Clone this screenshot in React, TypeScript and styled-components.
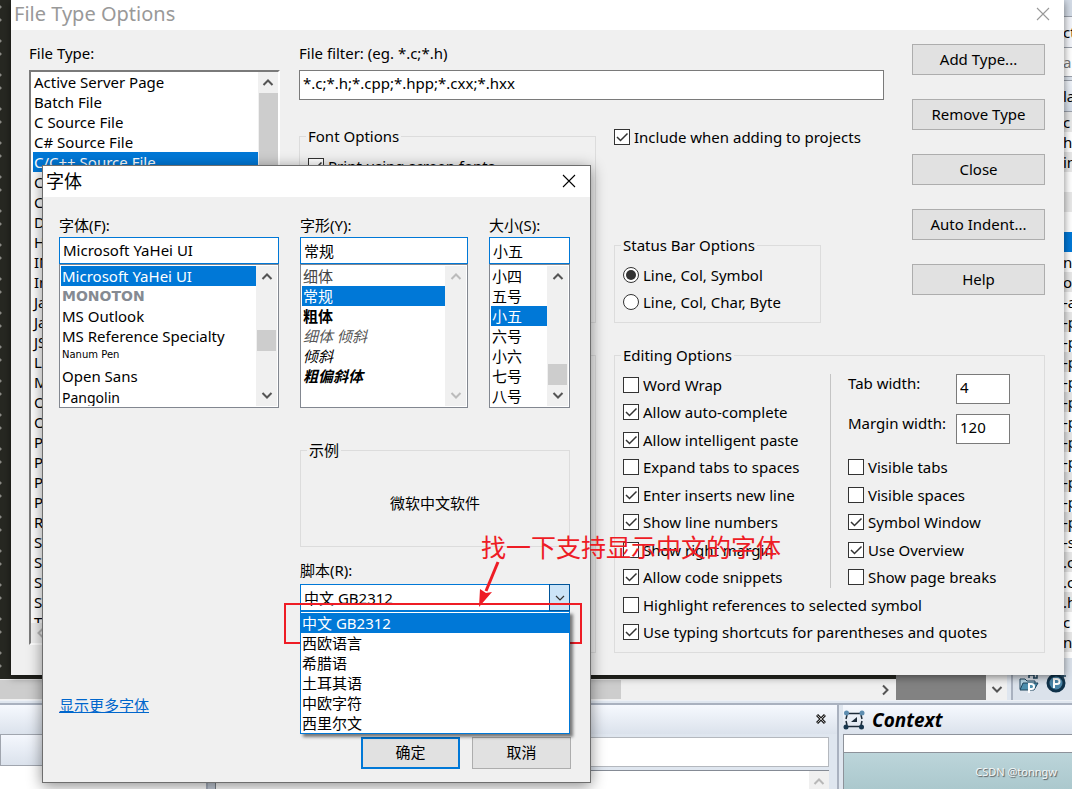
import React from "react";
import styled, { createGlobalStyle, css } from "styled-components";

const UI = `"Noto Sans", "Noto Sans CJK SC", sans-serif`;
const BLUE = "#0078d7";
const FACE = "#f0f0f0";

const Global = createGlobalStyle`
  *, *::before, *::after { box-sizing: border-box; }
  body { margin: 0; font: 15px/20px ${UI}; color: #000; overflow: hidden; }
  input, button, select { font: inherit; color: inherit; margin: 0; }
  ul { list-style: none; margin: 0; padding: 0; }
`;

/* ---------- desktop behind the dialogs ---------- */

const Desktop = styled.div`
  position: relative;
  display: flex;
  flex-direction: column;
  min-height: 100vh;
  overflow: hidden;
  background: #dfe6ef;
`;
const Workspace = styled.div`
  display: flex;
  flex: 1;
  border-bottom: 1px solid #eef1f6;
`;
const Editor = styled.div`
  display: flex;
  flex-direction: column;
  flex: 1;
`;
const Code = styled.div`
  flex: 1;
  background:
    radial-gradient(circle at 0 7px, #8b8b86 1px, transparent 2px) 0 0 / 11px 34px repeat-y,
    radial-gradient(circle at 0 20px, #8b8b86 1px, transparent 2px) 0 0 / 11px 34px repeat-y,
    #272822;
`;
const HScroll = styled.div`
  display: flex;
  align-items: center;
  height: 21px;
  background: ${FACE};
`;
const HThumb = styled.div`
  width: 621px;
  height: 19px;
  background: #cdcdcd;
`;
const HArrow = styled.div`
  display: flex;
  margin-left: auto;
  padding-right: 5px;
`;
const GreyGap = styled.div`
  width: 90px;
  background: #828282;
`;
const VScroll = styled.div`
  display: flex;
  flex-direction: column;
  justify-content: flex-end;
  align-items: center;
  width: 21px;
  padding-bottom: 5px;
  background: ${FACE};
`;
const VSplit = styled.div`
  width: 6px;
  background: #dfe6ef;
  border-right: 2px solid #a9b1bf;
`;
const Project = styled.aside`
  display: flex;
  flex-direction: column;
  width: 59px;
  background: #dbe2eb;
`;
const Strip = styled.div<{ $h: number; $bg: string; $c?: string }>`
  height: ${(p) => p.$h}px;
  line-height: ${(p) => p.$h - 1}px;
  padding-left: 50px;
  overflow: hidden;
  white-space: nowrap;
  background: ${(p) => p.$bg};
  color: ${(p) => p.$c ?? "#000"};
  border-bottom: 1px solid #9aa0aa;
`;
const FileRow = styled.li<{ $on?: boolean }>`
  height: 20px;
  padding-left: 50px;
  overflow: hidden;
  white-space: nowrap;
  background: #fff;
  &:nth-child(odd) { background: #e8e8e8; }
  ${(p) => p.$on && css`&&:nth-child(odd) { background: ${BLUE}; }`}
`;
const FileRows = styled.ul`
  height: 546px;
  overflow: hidden;
`;
const Tools = styled.div`
  display: flex;
  gap: 7px;
  padding: 15px 4px 0 6px;
`;
const HSplit = styled.div`
  height: 4px;
  border-bottom: 2px solid #a9b1bf;
`;
const Bottom = styled.div`
  display: flex;
  height: 84px;
`;
const Panel = styled.section`
  display: flex;
  flex-direction: column;
  flex: 1;
  border-right: 2px solid #a9b1bf;
`;
const ContextPanel = styled.section`
  display: flex;
  flex-direction: column;
  width: 233px;
  padding-left: 4px;
`;
const PanelBar = styled.header`
  display: flex;
  align-items: center;
  height: 29px;
  background: linear-gradient(#f6f9fe, #dbe2ec);
`;
const CloseTiny = styled.button`
  display: flex;
  margin-left: auto;
  margin-right: 11px;
  padding: 0 0 2px;
  border: 0;
  background: none;
`;
const ContextTitle = styled.h2`
  margin: 0 0 0 7px;
  font: italic bold 19px/26px ${UI};
`;
const Split = styled.div`
  display: flex;
  flex: 1;
`;
const TabSide = styled.div`
  width: 206px;
  background: #fff;
`;
const TabBox = styled.div`
  height: 32px;
  border: 1px solid #a0a5ae;
  background: linear-gradient(#f4f7fd, #dbe2ec);
`;
const SideSplit = styled.div`
  width: 10px;
  background: #c3cbd7;
  border-left: 2px solid #a9b1bf;
  border-right: 1px solid #7a8088;
`;
const ResultSide = styled.div`
  display: flex;
  flex-direction: column;
  flex: 1;
  gap: 3px;
  padding: 3px 8px 0 0;
`;
const SearchBox = styled.input`
  height: 30px;
  border: 1px solid #b4b8be;
  background: #fff;
`;
const Results = styled.div`
  display: flex;
  flex: 1;
  justify-content: flex-end;
  border-top: 1px solid #858b95;
  background: #fff;
`;
const ResultScroll = styled.div`
  display: flex;
  justify-content: center;
  width: 20px;
  padding-top: 5px;
  background: ${FACE};
`;
const ContextLine = styled.div`
  height: 19px;
  border: 1px solid #8d929a;
  border-right: 0;
  background: #fff;
`;
const ContextView = styled.div`
  flex: 1;
  padding: 9px 15px 0 0;
  border-left: 1px solid #8d929a;
  background: linear-gradient(#bcd5da, #abc8cd);
  color: #f4f8f8;
  font-size: 11px;
  text-align: right;
  text-shadow: 1px 1px 1px #555;
`;

/* ---------- shared controls ---------- */

const Chevron = ({ dir = "down", color = "#555" }: { dir?: string; color?: string }) => {
  const d: Record<string, string> = {
    down: "M1.500 4L6 8.500 10.500 4",
    up: "M1.500 8L6 3.500 10.500 8",
    right: "M4 1.500L8.500 6 4 10.500",
    left: "M8 1.500L3.500 6 8 10.500",
  };
  return (
    <svg width="12" height="12" viewBox="0 0 12 12" fill="none" stroke={color} strokeWidth="2">
      <path d={d[dir]} />
    </svg>
  );
};
const Cross = ({ color }: { color: string }) => (
  <svg width="14" height="14" viewBox="0 0 14 14" stroke={color} strokeWidth="1.1">
    <path d="M1 1l12 12M13 1L1 13" />
  </svg>
);

const Check = styled.label`
  display: flex;
  align-items: center;
  gap: 4px;
  height: 22px;
  white-space: nowrap;
`;
const Mark = styled.span`
  display: grid;
  width: 16px;
  height: 16px;
  > * { grid-area: 1 / 1; }
  svg { pointer-events: none; }
`;
const Tick = styled.input<{ $round?: boolean }>`
  appearance: none;
  width: 16px;
  height: 16px;
  border: 1px solid #333;
  border-radius: ${(p) => (p.$round ? "50%" : "0")};
  background: #fff;
`;
const CheckBox = ({ label, on }: { label: string; on?: boolean }) => (
  <Check>
    <Mark>
      <Tick type="checkbox" defaultChecked={on} />
      {on && (
        <svg width="16" height="16" viewBox="0 0 16 16" fill="none" stroke="#333" strokeWidth="1.5">
          <path d="M3 8l3.5 3.5L13.5 4.5" />
        </svg>
      )}
    </Mark>
    {label}
  </Check>
);
const Radio = ({ label, on }: { label: string; on?: boolean }) => (
  <Check>
    <Mark>
      <Tick $round type="radio" name="statusbar" defaultChecked={on} />
      {on && (
        <svg width="16" height="16" viewBox="0 0 16 16">
          <circle cx="8" cy="8" r="5" fill="#333" />
        </svg>
      )}
    </Mark>
    {label}
  </Check>
);
const Button = styled.button<{ $primary?: boolean }>`
  height: 31px;
  padding: 0 0 2px;
  border: 1px solid #adadad;
  background: #e1e1e1;
  ${(p) => p.$primary && css`border: 2px solid ${BLUE};`}
`;
const Group = styled.fieldset`
  min-width: 0;
  margin: 0;
  padding: 8px 8px 9px;
  border: 1px solid #dcdcdc;
`;
const Legend = styled.legend`
  height: 22px;
  padding: 0 2px 0 0;
  line-height: 22px;
  box-shadow: -2px 0 ${FACE};
`;
const Field = styled.input`
  height: 30px;
  padding: 0 3px 5px;
  border: 1px solid #7a7a7a;
  background: #fff;
`;
const TitleBar = styled.header<{ $dim?: boolean }>`
  display: flex;
  align-items: center;
  justify-content: space-between;
  height: ${(p) => (p.$dim ? 30 : 31)}px;
  padding: 0 14px 2px 3px;
  background: #fff;
  color: ${(p) => (p.$dim ? "#999" : "#000")};
  h1 { margin: 0; font: ${(p) => (p.$dim ? 20 : 18)}px/28px ${UI}; }
  button { display: flex; padding: 0; border: 0; background: none; }
`;
const ScrollBar = styled.div<{ $w: number }>`
  display: flex;
  flex-direction: column;
  align-items: center;
  width: ${(p) => p.$w}px;
  padding: 5px 0;
  background: ${FACE};
`;
const Thumb = styled.div<{ $h: number; $push: number }>`
  width: 19px;
  height: ${(p) => p.$h}px;
  margin-top: ${(p) => p.$push}px;
  background: #cdcdcd;
`;
const Spring = styled.div`
  flex: 1;
`;

/* ---------- File Type Options dialog ---------- */

const TypeDialog = styled.section`
  position: absolute;
  top: 0;
  left: 11px;
  right: 8px;
  background: ${FACE};
  box-shadow: 0 2px 8px rgba(0, 0, 0, 0.5);
`;
const TypeBody = styled.div`
  display: grid;
  grid-template-columns: 252px 297px 1fr 143px;
  grid-template-rows: auto 202px auto;
  gap: 21px 18px;
  padding: 14px 19px 22px 18px;
`;
const Stack = styled.div`
  display: flex;
  flex-direction: column;
  gap: 8px;
  line-height: 18px;
`;
const TypeColumn = styled(Stack)`
  grid-row: 1 / 4;
  margin: 0 1px 8px 0;
`;
const TypeList = styled.div`
  display: flex;
  flex-direction: column;
  flex: 1;
  contain: size;
  overflow: hidden;
  border: 2px solid;
  border-color: #7a7a7a #fff #fff #7a7a7a;
  background: #fff;
`;
const TypeRows = styled.div`
  display: flex;
  flex: 1;
  min-height: 0;
  ul { flex: 1; padding-left: 2px; overflow: hidden; }
`;
const TypeRow = styled.li<{ $on?: boolean }>`
  height: 20px;
  line-height: 20px;
  padding-left: 1px;
  ${(p) => p.$on && css`background: ${BLUE}; color: #fff;`}
`;
const ListFoot = styled.div`
  display: flex;
  align-items: center;
  height: 20px;
  padding-left: 4px;
  background: ${FACE};
`;
const FilterCell = styled(Stack)`
  grid-column: 2 / 4;
`;
const ButtonColumn = styled.div`
  grid-column: 4;
  grid-row: 1 / 3;
  display: flex;
  flex-direction: column;
  gap: 24px;
  margin-left: 10px;
`;
const FontGroup = styled(Group)`
  grid-column: 2;
  margin-top: 4px;
`;
const EmptyGroup = styled(Group)`
  grid-column: 2;
  margin-top: 11px;
`;
const MiddleCell = styled.div`
  grid-column: 3;
  display: flex;
  flex-direction: column;
  justify-content: space-between;
  align-items: flex-start;
  padding-top: 5px;
`;
const StatusGroup = styled(Group)`
  display: flex;
  flex-direction: column;
  gap: 5px;
  width: 207px;
`;
const EditGroup = styled(Group)`
  grid-column: 3 / 5;
`;
const EditRows = styled.div`
  display: flex;
  flex-direction: column;
  justify-content: space-between;
  height: 269px;
`;
const EditColumns = styled.div`
  display: flex;
  height: 214px;
`;
const Spread = styled.div`
  display: flex;
  flex-direction: column;
  justify-content: space-between;
`;
const EditLeft = styled(Spread)`
  width: 208px;
  border-right: 1px solid #c4c4c4;
  margin-right: 17px;
`;
const EditRight = styled(Spread)`
  flex: 1;
`;
const Widths = styled.div`
  display: grid;
  grid-template-columns: 108px 54px;
  row-gap: 10px;
  line-height: 18px;
`;
const RightChecks = styled(Spread)`
  height: 132px;
`;

/* ---------- font dialog ---------- */

const FontDialog = styled.section`
  position: absolute;
  top: 165px;
  left: 42px;
  width: 549px;
  border: 1px solid #6e6e6e;
  background: ${FACE};
  box-shadow: 0 3px 14px rgba(0, 0, 0, 0.45);
`;
const FontBody = styled.div`
  padding: 18px 19px 13px 16px;
`;
const Pickers = styled.div`
  display: grid;
  grid-template-columns: 220px 168px 81px;
  column-gap: 21px;
`;
const Picker = styled.div`
  display: flex;
  flex-direction: column;
`;
const PickLabel = styled.label`
  height: 22px;
`;
const PickInput = styled.input`
  width: 100%;
  height: 27px;
  padding: 0 3px 1px;
  border: 1px solid ${BLUE};
  background: #fff;
`;
const PickList = styled.div`
  display: flex;
  height: 144px;
  padding: 1px;
  border: 1px solid #828790;
  background: #fff;
  ul { flex: 1; overflow: hidden; }
`;
const Pick = styled.li<{ $on?: boolean; $look?: string }>`
  height: 20px;
  padding-left: 1px;
  white-space: nowrap;
  ${(p) => p.$on && css`background: ${BLUE}; color: #fff;`}
  ${(p) => p.$look === "display" && css`font: bold 14px/20px "DejaVu Sans", sans-serif; color: #858a92;`}
  ${(p) => p.$look === "pen" && css`font: 10px/18px "DejaVu Sans", sans-serif;`}
  ${(p) => p.$look === "hand" && css`font-size: 14px; line-height: 23px;`}
  ${(p) => p.$look === "light" && css`color: #444;`}
  ${(p) => p.$look === "bold" && css`font-weight: bold;`}
  ${(p) => p.$look === "lightItalic" && css`color: #555; font-style: italic;`}
  ${(p) => p.$look === "italic" && css`font-style: italic;`}
  ${(p) => p.$look === "boldItalic" && css`font-weight: bold; font-style: italic;`}
`;
const RightHalf = styled.div`
  margin: 31px 1px 0 241px;
`;
const Sample = styled(Group)`
  height: 108px;
`;
const SampleText = styled.p`
  margin: 24px 0 0;
  text-align: center;
`;
const Script = styled.div`
  position: relative;
  display: flex;
  flex-direction: column;
  margin-top: 13px;
`;
const SelectWrap = styled.div`
  display: grid;
  grid-template-columns: 1fr 21px;
  margin-top: 2px;
`;
const ScriptSelect = styled.select`
  appearance: none;
  grid-area: 1 / 1 / 2 / 3;
  height: 27px;
  padding: 0 3px;
  border: 1px solid ${BLUE};
  border-radius: 0;
  background: #fff;
`;
const SelectArrow = styled.div`
  grid-area: 1 / 2;
  display: flex;
  align-items: center;
  justify-content: center;
  border: 1px solid #005499;
  background: #cce4f7;
  pointer-events: none;
`;
const Menu = styled.ul`
  position: absolute;
  top: 51px;
  left: 0;
  right: 0;
  z-index: 1;
  padding-top: 1px;
  border: 1px solid ${BLUE};
  background: #fff;
  box-shadow: 3px 3px 3px rgba(0, 0, 0, 0.5);
`;
const MenuItem = styled.li<{ $on?: boolean }>`
  height: 20px;
  padding-left: 1px;
  ${(p) => p.$on && css`background: ${BLUE}; color: #fff;`}
`;
const More = styled.a`
  display: inline-block;
  margin-top: 84px;
  color: #0066cc;
`;
const Actions = styled.div`
  display: flex;
  justify-content: flex-end;
  gap: 12px;
  margin-top: 22px;
  button { width: 99px; height: 32px; }
`;

/* ---------- annotation ---------- */

const RedFrame = styled.div`
  position: absolute;
  top: 603px;
  left: 284px;
  width: 298px;
  height: 41px;
  border: 2px solid #ee1c25;
`;
const RedNote = styled.div`
  position: absolute;
  top: 529px;
  left: 481px;
  font-size: 25px;
  line-height: 36px;
  color: #ee1c25;
  white-space: nowrap;
`;
const RedArrow = styled.svg`
  position: absolute;
  top: 558px;
  left: 474px;
`;

const types = ["Active Server Page", "Batch File", "C Source File", "C# Source File", "C/C++ Source File",
  "C", "C", "D", "H", "IN", "In", "Ja", "Ja", "JS", "L", "M", "O", "O", "P", "P", "P", "P", "R", "S", "S", "S", "S", "T"];
const files = ["c", "h", "in", "", "", "", "", "ne", "o", "-a", "-p", "-p", "-p", "-p", "-p", "-p", "-p", "-p", "-p", "-p", "-p",
  "-s", ".c", ".c", ".h", "c", "n", "ne"];
const fonts: [string, string?][] = [["Microsoft YaHei UI"], ["MONOTON", "display"], ["MS Outlook"], ["MS Reference Specialty"],
  ["Nanum Pen", "pen"], ["Open Sans"], ["Pangolin", "hand"]];
const styles: [string, string?][] = [["细体", "light"], ["常规"], ["粗体", "bold"], ["细体 倾斜", "lightItalic"], ["倾斜", "italic"], ["粗偏斜体", "boldItalic"]];
const sizes = ["小四", "五号", "小五", "六号", "小六", "七号", "八号"];
const scripts = ["中文 GB2312", "西欧语言", "希腊语", "土耳其语", "中欧字符", "西里尔文"];
const leftChecks: [string, boolean][] = [["Word Wrap", false], ["Allow auto-complete", true], ["Allow intelligent paste", true],
  ["Expand tabs to spaces", false], ["Enter inserts new line", true], ["Show line numbers", true], ["Show right margin", false], ["Allow code snippets", true]];
const rightChecks: [string, boolean][] = [["Visible tabs", false], ["Visible spaces", false], ["Symbol Window", true], ["Use Overview", true], ["Show page breaks", false]];

const Background = () => (
  <>
    <Workspace>
      <Editor>
        <Code />
        <HScroll>
          <HThumb />
          <HArrow><Chevron dir="right" /></HArrow>
        </HScroll>
      </Editor>
      <GreyGap />
      <VScroll><Chevron /></VScroll>
      <VSplit />
      <Project>
        <Strip $h={17} $bg="#d3dbe6" />
        <Strip $h={31} $bg="#f3f5fa">ct</Strip>
        <Strip $h={29} $bg="#fff" $c="#777">a</Strip>
        <Strip $h={4} $bg="#dbe2eb" />
        <Strip $h={31} $bg="linear-gradient(#f0f4fa,#d5dde8)">la</Strip>
        <FileRows>
          {files.map((f, i) => <FileRow key={i} $on={i === 6}>{f}</FileRow>)}
        </FileRows>
        <Tools>
          <svg width="20" height="20" viewBox="0 0 20 20">
            <path d="M10 5V2h5M15 2v3M18 0v5h-4" stroke="#21465f" fill="none" strokeWidth="1.5" />
            <path d="M1 6h5l2 2h8v3H5l-3 5H1z" fill="#b9d9e8" stroke="#21465f" />
            <path d="M4 10h15l-4 7H1z" fill="#4d8fae" stroke="#21465f" />
            <path d="M10 20V11h2.500a2.500 2.500 0 0 1 0 5H10" fill="none" stroke="#fff" strokeWidth="2" />
          </svg>
          <svg width="20" height="20" viewBox="0 0 20 20">
            <circle cx="10" cy="10" r="8" fill="#4b86a8" stroke="#10324a" strokeWidth="3" />
            <path d="M8 15V6h3a2.500 2.500 0 0 1 0 5H8" fill="none" stroke="#fff" strokeWidth="2" />
            <path d="M17 0v6M14 3h6" stroke="#21465f" strokeWidth="1.500" />
          </svg>
        </Tools>
      </Project>
    </Workspace>
    <HSplit />
    <Bottom>
      <Panel>
        <PanelBar>
          <CloseTiny aria-label="Close panel">
            <svg width="10" height="10" viewBox="0 0 10 10" stroke="#222" strokeWidth="3">
              <path d="M1 1l8 8M9 1L1 9" />
              <path d="M1.500 1.500l7 7M8.500 1.500l-7 7" stroke="#ddd" strokeWidth="0.800" />
            </svg>
          </CloseTiny>
        </PanelBar>
        <Split>
          <TabSide><TabBox /></TabSide>
          <SideSplit />
          <ResultSide>
            <SearchBox aria-label="Search" />
            <Results>
              <ResultScroll><Chevron dir="up" color="#b8b8b8" /></ResultScroll>
            </Results>
          </ResultSide>
        </Split>
      </Panel>
      <ContextPanel>
        <PanelBar>
          <svg width="22" height="20" viewBox="0 0 22 20">
            <path d="M5 3.500h12M5 16.500h12" stroke="#1d2b38" strokeWidth="1.500" />
            <path d="M4 5l-1 4M3 11l1 4M18 5l1 4M19 11l-1 4" stroke="#1d2b38" strokeWidth="1.500" />
            <path d="M14 7v5H8z" fill="#1d2b38" />
            <circle cx="3.500" cy="3" r="2.500" fill="#5d8db0" />
            <circle cx="19" cy="3" r="2.500" fill="#5d8db0" />
            <circle cx="3" cy="17" r="2.500" fill="#17364e" />
            <circle cx="18.500" cy="17" r="2.500" fill="#17364e" />
          </svg>
          <ContextTitle>Context</ContextTitle>
        </PanelBar>
        <ContextLine />
        <ContextView>CSDN @tonngw</ContextView>
      </ContextPanel>
    </Bottom>
  </>
);

const FileTypeOptions = () => (
  <TypeDialog>
    <TitleBar $dim>
      <h1>File Type Options</h1>
      <button aria-label="Close"><Cross color="#999" /></button>
    </TitleBar>
    <TypeBody>
      <TypeColumn>
        <span id="types">File Type:</span>
        <TypeList>
          <TypeRows>
            <ul role="listbox" aria-labelledby="types">
              {types.map((t, i) => <TypeRow key={i} role="option" aria-selected={i === 4} $on={i === 4}>{t}</TypeRow>)}
            </ul>
            <ScrollBar $w={20}>
              <Chevron dir="up" />
              <Thumb $h={160} $push={4} />
            </ScrollBar>
          </TypeRows>
          <ListFoot><Chevron dir="left" color="#b8b8b8" /></ListFoot>
        </TypeList>
      </TypeColumn>
      <FilterCell>
        <label htmlFor="filter">File filter: (eg. *.c;*.h)</label>
        <Field id="filter" defaultValue="*.c;*.h;*.cpp;*.hpp;*.cxx;*.hxx" />
      </FilterCell>
      <ButtonColumn>
        {["Add Type...", "Remove Type", "Close", "Auto Indent...", "Help"].map((b) => <Button key={b}>{b}</Button>)}
      </ButtonColumn>
      <FontGroup>
        <Legend>Font Options</Legend>
        <CheckBox label="Print using screen fonts" on />
      </FontGroup>
      <MiddleCell>
        <CheckBox label="Include when adding to projects" on />
        <StatusGroup>
          <Legend>Status Bar Options</Legend>
          <Radio label="Line, Col, Symbol" on />
          <Radio label="Line, Col, Char, Byte" />
        </StatusGroup>
      </MiddleCell>
      <EmptyGroup />
      <EditGroup>
        <Legend>Editing Options</Legend>
        <EditRows>
          <EditColumns>
            <EditLeft>
              {leftChecks.map(([l, on]) => <CheckBox key={l} label={l} on={on} />)}
            </EditLeft>
            <EditRight>
              <Widths>
                <label htmlFor="tabw">Tab width:</label>
                <Field id="tabw" defaultValue="4" />
                <label htmlFor="marginw">Margin width:</label>
                <Field id="marginw" defaultValue="120" />
              </Widths>
              <RightChecks>
                {rightChecks.map(([l, on]) => <CheckBox key={l} label={l} on={on} />)}
              </RightChecks>
            </EditRight>
          </EditColumns>
          <CheckBox label="Highlight references to selected symbol" />
          <CheckBox label="Use typing shortcuts for parentheses and quotes" on />
        </EditRows>
      </EditGroup>
    </TypeBody>
  </TypeDialog>
);

const FontPicker = () => (
  <FontDialog>
    <TitleBar>
      <h1>字体</h1>
      <button aria-label="关闭"><Cross color="#000" /></button>
    </TitleBar>
    <FontBody>
      <Pickers>
        <Picker>
          <PickLabel htmlFor="font">字体(F):</PickLabel>
          <PickInput id="font" defaultValue="Microsoft YaHei UI" />
          <PickList>
            <ul role="listbox" aria-label="字体">
              {fonts.map(([f, look], i) => <Pick key={f} role="option" aria-selected={i === 0} $on={i === 0} $look={look}>{f}</Pick>)}
            </ul>
            <ScrollBar $w={21}>
              <Chevron dir="up" />
              <Thumb $h={21} $push={47} />
              <Spring />
              <Chevron />
            </ScrollBar>
          </PickList>
        </Picker>
        <Picker>
          <PickLabel htmlFor="style">字形(Y):</PickLabel>
          <PickInput id="style" defaultValue="常规" />
          <PickList>
            <ul role="listbox" aria-label="字形">
              {styles.map(([s, look], i) => <Pick key={s} role="option" aria-selected={i === 1} $on={i === 1} $look={look}>{s}</Pick>)}
            </ul>
            <ScrollBar $w={21}>
              <Chevron dir="up" color="#bbb" />
              <Spring />
              <Chevron color="#bbb" />
            </ScrollBar>
          </PickList>
        </Picker>
        <Picker>
          <PickLabel htmlFor="size">大小(S):</PickLabel>
          <PickInput id="size" defaultValue="小五" />
          <PickList>
            <ul role="listbox" aria-label="大小">
              {sizes.map((s, i) => <Pick key={s} role="option" aria-selected={i === 2} $on={i === 2}>{s}</Pick>)}
            </ul>
            <ScrollBar $w={21}>
              <Chevron dir="up" />
              <Thumb $h={21} $push={81} />
              <Spring />
              <Chevron />
            </ScrollBar>
          </PickList>
        </Picker>
      </Pickers>
      <RightHalf>
        <Sample>
          <Legend>示例</Legend>
          <SampleText>微软中文软件</SampleText>
        </Sample>
        <Script>
          <PickLabel htmlFor="script">脚本(R):</PickLabel>
          <SelectWrap>
            <ScriptSelect id="script" defaultValue={scripts[0]}>
              <option>{scripts[0]}</option>
            </ScriptSelect>
            <SelectArrow>
              <svg width="10" height="6" viewBox="0 0 10 6" fill="none" stroke="#333" strokeWidth="1.200">
                <path d="M1 1l4 4 4-4" />
              </svg>
            </SelectArrow>
          </SelectWrap>
          <Menu role="listbox" aria-label="脚本">
            {scripts.map((s, i) => <MenuItem key={s} role="option" aria-selected={i === 0} $on={i === 0}>{s}</MenuItem>)}
          </Menu>
        </Script>
      </RightHalf>
      <More href="#fonts">显示更多字体</More>
      <Actions>
        <Button $primary>确定</Button>
        <Button>取消</Button>
      </Actions>
    </FontBody>
  </FontDialog>
);

export default function App() {
  return (
    <>
      <Global />
      <Desktop>
        <Background />
        <FileTypeOptions />
        <FontPicker />
        <RedFrame />
        <RedNote>找一下支持显示中文的字体</RedNote>
        <RedArrow width="30" height="52" viewBox="0 0 30 52">
          <path d="M24 4L12 33" stroke="#ee1c25" strokeWidth="3" />
          <path d="M5 49l1-18 6 4 6-1z" fill="#ee1c25" />
        </RedArrow>
      </Desktop>
    </>
  );
}
